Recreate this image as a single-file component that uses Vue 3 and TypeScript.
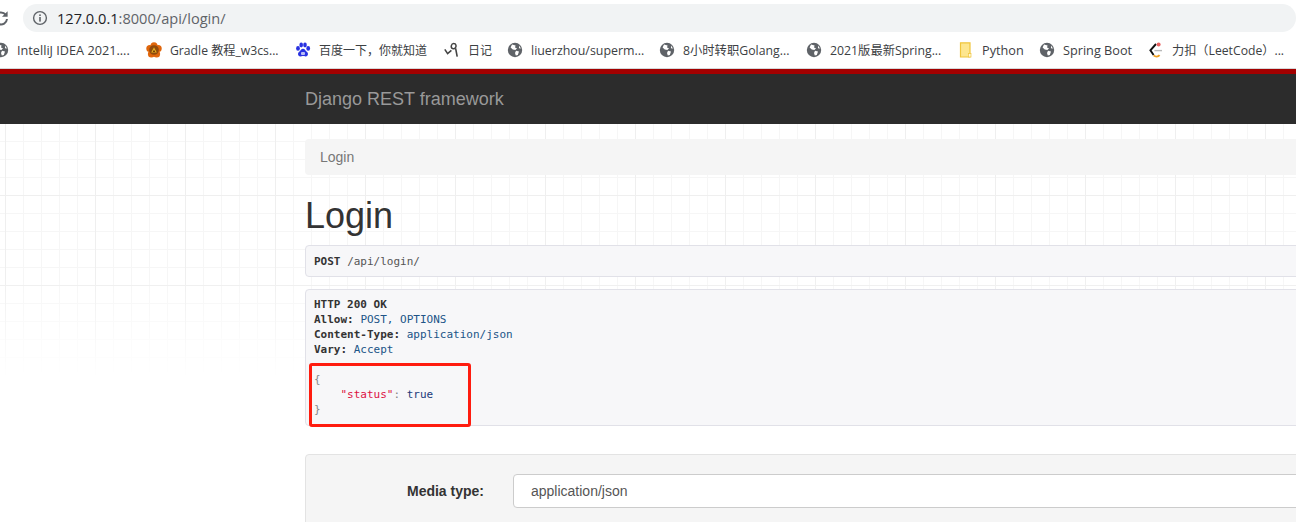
<script setup lang="ts">
interface Bookmark { label: string; icon: string; width: number; size: number }
const bookmarks: Bookmark[] = [
  { label: 'IntelliJ IDEA 2021....', icon: 'globe', width: 153, size: 12.7 },
  { label: 'Gradle 教程_w3cs...', icon: 'gradle', width: 149, size: 12.2 },
  { label: '百度一下，你就知道', icon: 'baidu', width: 149, size: 12 },
  { label: '日记', icon: 'diary', width: 63, size: 12 },
  { label: 'liuerzhou/superm...', icon: 'globe', width: 152, size: 12.4 },
  { label: '8小时转职Golang...', icon: 'globe', width: 147, size: 12.3 },
  { label: '2021版最新Spring...', icon: 'globe', width: 152, size: 12.3 },
  { label: 'Python', icon: 'folder', width: 81, size: 12.7 },
  { label: 'Spring Boot', icon: 'globe', width: 109, size: 12.7 },
  { label: '力扣（LeetCode）...', icon: 'leetcode', width: 140, size: 12.2 },
]
</script>

<template>
  <div class="page">
    <header class="chrome">
      <div class="addr-row">
        <svg class="reload" width="16" height="16" viewBox="0 0 16 16">
          <path d="M12.8 4.8A6 6 0 1 0 14 9" fill="none" stroke="#5f6368" stroke-width="2" />
          <path d="M14.6 1.2V6.8H9z" fill="#5f6368" />
        </svg>
        <div class="pill">
          <svg class="info" width="16" height="16" viewBox="0 0 16 16">
            <circle cx="8" cy="8" r="6.4" fill="none" stroke="#5f6368" stroke-width="1.4" />
            <rect x="7.2" y="7" width="1.6" height="4.6" fill="#5f6368" />
            <rect x="7.2" y="4.4" width="1.6" height="1.6" fill="#5f6368" />
          </svg>
          <span class="url"><span class="host">127.0.0.1</span>:8000/api/login/</span>
        </div>
      </div>
      <div class="bm-row">
        <div v-for="b in bookmarks" :key="b.label + b.icon" class="bm" :style="{ width: b.width + 'px' }">
          <svg class="bm-icon" width="16" height="16" viewBox="0 0 16 16">
            <template v-if="b.icon === 'globe'">
              <circle cx="8" cy="8" r="7.2" fill="#5f6368" />
              <path d="M5 2.4 8.6 3.4 8 5.4 10 6.2 8.4 8 5.8 7.4 3.6 5.6ZM9 8.8 12 9.4 10.8 13 8.8 13.6 8 11Z M12 3.6 14 6.6 12 6.2Z" fill="#fff" />
            </template>
            <template v-else-if="b.icon === 'gradle'">
              <circle cx="8" cy="3.7" r="3.5" fill="#e0660c" />
              <circle cx="12.2" cy="6.6" r="3.5" fill="#e0660c" />
              <circle cx="10.6" cy="11.9" r="3.5" fill="#e0660c" />
              <circle cx="5.4" cy="11.9" r="3.5" fill="#e0660c" />
              <circle cx="3.8" cy="6.6" r="3.5" fill="#e0660c" />
              <circle cx="8" cy="8" r="4.8" fill="#8f4a0c" />
              <path d="M5.2 10.6 8 5.2 10.8 10.6Z" fill="#e8b020" />
              <path d="M6.8 10 8 7.8 9.2 10Z" fill="#6b3506" />
            </template>
            <template v-else-if="b.icon === 'baidu'">
              <ellipse cx="3" cy="6.4" rx="1.9" ry="2.3" fill="#2932e1" />
              <ellipse cx="6.2" cy="3" rx="1.8" ry="2.4" fill="#2932e1" />
              <ellipse cx="10" cy="3" rx="1.8" ry="2.4" fill="#2932e1" />
              <ellipse cx="13.2" cy="6.4" rx="1.9" ry="2.3" fill="#2932e1" />
              <path d="M8 6.8C6 6.8 5.6 8.8 4 10 2.2 11.4 3 14.6 5.6 14.4 6.8 14.3 7.2 14 8 14S9.4 14.4 10.6 14.4C13 14.6 13.8 11.4 12 10 10.4 8.8 10 6.8 8 6.8Z" fill="#2932e1" />
              <rect x="6" y="10" width="4" height="3" rx="1" fill="#b9bdf5" />
            </template>
            <template v-else-if="b.icon === 'diary'">
              <path d="M.8 7.4 3.6 11.6 7.4 8.4" fill="none" stroke="#444" stroke-width="1.6" />
              <path d="M10 1.6C7.2 1.4 6.2 5.4 8.6 6.6 11 7.6 13 4.6 11.6 2.4 11.2 1.9 10.6 1.6 10 1.6Z" fill="none" stroke="#444" stroke-width="1.5" />
              <path d="M11.6 6.4 13.2 14.6" fill="none" stroke="#444" stroke-width="1.6" />
            </template>
            <template v-else-if="b.icon === 'folder'">
              <path d="M2.5 .8H12V15H2.5Z" fill="#fde68f" stroke="#f0c53c" stroke-width="1.2" />
              <rect x="10.4" y="11.6" width="2.6" height="3.4" fill="#fff8dc" stroke="#f0c53c" stroke-width=".7" />
            </template>
            <template v-else>
              <path d="M8 2 2.4 8.4 5.6 13" fill="none" stroke="#111" stroke-width="1.9" />
              <path d="M5.6 13.4C7.4 15 10 15 11.6 13.2" fill="none" stroke="#f0a020" stroke-width="1.9" />
              <path d="M6.4 8.6H14" stroke="#b8b8b8" stroke-width="1.4" />
              <circle cx="10.6" cy="2.4" r="2" fill="#e86060" />
            </template>
          </svg>
          <span class="bm-label" :style="{ fontSize: b.size + 'px' }">{{ b.label }}</span>
        </div>
      </div>
    </header>

    <nav class="navbar"><span class="brand">Django REST framework</span></nav>

    <main class="main">
      <div class="grid-bg"></div>
      <div class="content">
        <div class="crumb">Login</div>
        <h1 class="title">Login</h1>
        <pre class="req"><b>POST</b> <span class="path">/api/login/</span></pre>
        <pre class="res"><b>HTTP 200 OK</b>
<b>Allow:</b> <span class="val">POST, OPTIONS</span>
<b>Content-Type:</b> <span class="val">application/json</span>
<b>Vary:</b> <span class="val">Accept</span>

<span class="punc">{</span>
    <span class="str">"status"</span><span class="punc">:</span> <span class="kw">true</span>
<span class="punc">}</span></pre>
        <div class="well">
          <label class="form-label">Media type:</label>
          <div class="select">application/json</div>
        </div>
      </div>
      <div class="mark"></div>
    </main>
  </div>
</template>

<style>
html, body { margin: 0; background: #fff; overflow: hidden; }
</style>

<style scoped>
.page {
  position: relative;
  width: 1296px;
  height: 522px;
  overflow: hidden;
  background: #fff;
  font-family: "Liberation Sans", Arial, sans-serif;
}
.chrome { height: 68px; border-bottom: 1px solid #d6d8da; background: #fff; }
.addr-row { display: flex; align-items: center; height: 32px; padding-top: 4px; box-sizing: border-box; margin-left: -7px; }
.reload { flex: none; margin-right: 14px; }
.pill {
  flex: 1;
  display: flex;
  align-items: center;
  height: 28px;
  border-radius: 14px;
  background: #f1f3f4;
  padding-left: 9px;
}
.info { flex: none; margin-right: 9px; }
.url { font-family: "Open Sans", "Noto Sans", sans-serif; font-size: 14.6px; color: #5f6368; white-space: nowrap; }
.host { color: #202124; }
.bm-row { display: flex; align-items: center; height: 36px; margin-left: -7px; white-space: nowrap; }
.bm { flex: none; display: flex; align-items: center; }
.bm-icon { flex: none; margin-right: 8px; }
.bm-label { font-family: "Open Sans", "Noto Sans CJK SC", sans-serif; color: #3c4043; }

.navbar {
  height: 50px;
  border-top: 5px solid #a30000;
  background: #2c2c2c;
  display: flex;
  align-items: center;
  padding-left: 305px;
}
.brand { font-size: 18px; color: #999; }

.main { position: relative; height: 398px; }
.grid-bg {
  position: absolute;
  left: 0;
  right: 0;
  top: 0;
  height: 254px;
  background-image:
    linear-gradient(90deg, #efefef 1px, transparent 1px),
    linear-gradient(180deg, #efefef 1px, transparent 1px),
    linear-gradient(90deg, #f6f6f6 1px, transparent 1px),
    linear-gradient(180deg, #f6f6f6 1px, transparent 1px);
  background-size: 90px 90px, 90px 90px, 18px 18px, 18px 18px;
  background-position: 5px 0, 0 71px, 5px 0, 0 17px;
  -webkit-mask-image: linear-gradient(#000 60%, transparent);
  mask-image: linear-gradient(#000 60%, transparent);
}
.content { position: relative; width: 1140px; padding: 15px 0 0 305px; }
.crumb {
  height: 36px;
  line-height: 36px;
  padding-left: 15px;
  border-radius: 4px;
  background: #f5f5f5;
  font-size: 14px;
  color: #777;
}
.title {
  margin: 20px 0 10px;
  height: 40px;
  line-height: 41px;
  font-size: 36px;
  font-weight: 500;
  color: #333;
}
pre {
  margin: 0;
  box-sizing: border-box;
  border: 1px solid #e1e1e8;
  border-radius: 4px;
  background: #f7f7f9;
  font-family: "DejaVu Sans Mono", monospace;
  font-size: 11px;
  line-height: 15px;
  color: #333;
}
pre b { font-weight: 700; }
.req { height: 32px; padding: 8px; }
.path { color: #555; }
.res { margin-top: 12px; height: 137px; padding: 7px 8px; }
.val { color: #205487; }
.punc { color: #888; }
.str { color: #d14; }
.kw { color: #1b3a7a; }
.well {
  display: flex;
  align-items: flex-start;
  box-sizing: border-box;
  height: 120px;
  margin-top: 28px;
  padding: 19px 0 0 0;
  border: 1px solid #e3e3e3;
  border-radius: 4px;
  background: #f5f5f5;
}
.form-label {
  width: 178px;
  text-align: right;
  font-size: 14px;
  font-weight: 700;
  line-height: 34px;
  color: #333;
  flex: none;
}
.select {
  flex: 1;
  box-sizing: border-box;
  height: 34px;
  margin-left: 29px;
  padding-left: 17px;
  line-height: 32px;
  border: 1px solid #ccc;
  border-radius: 4px;
  background: #fff;
  font-size: 14px;
  color: #555;
}
.mark {
  position: absolute;
  left: 309px;
  top: 239px;
  width: 162px;
  height: 64px;
  box-sizing: border-box;
  border: 3px solid #ff1c0f;
  border-radius: 3px;
}
</style>
